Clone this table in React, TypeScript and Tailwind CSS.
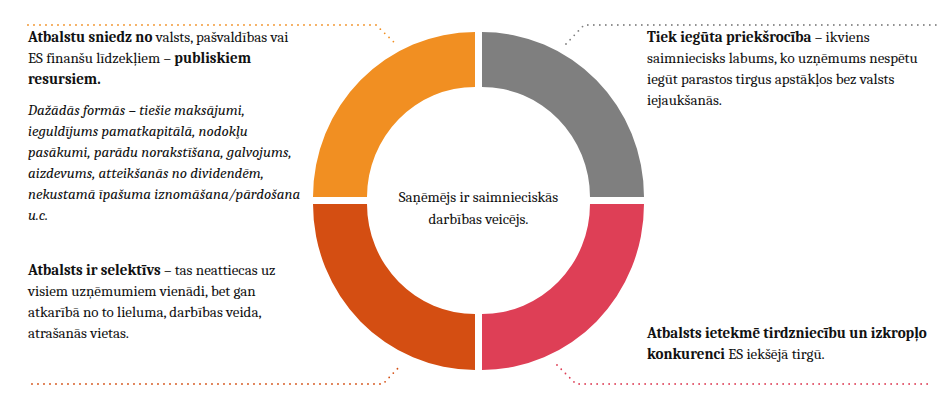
import React from 'react';

// four quarter rings of the donut, each with its own colour
const segments = [
  { color: '#F18F22', d: 'M 0 165 A 162 165 0 0 1 162 0 L 162 55 A 108 110 0 0 0 54 165 Z' },
  { color: '#7F7F7F', d: 'M 169 0 A 162 165 0 0 1 331 165 L 277 165 A 108 110 0 0 0 169 55 Z' },
  { color: '#D44E12', d: 'M 0 172 A 162 166 0 0 0 162 338 L 162 282 A 108 110 0 0 1 54 172 Z' },
  { color: '#DE3F56', d: 'M 331 172 A 162 166 0 0 1 169 338 L 169 282 A 108 110 0 0 0 277 172 Z' },
];

// dotted leader lines from the texts to the ring
const leaders = [
  { color: '#F18F22', points: '28,25 376,25 397,45' },
  { color: '#7F7F7F', points: '566,44 584,25 938,25' },
  { color: '#D44E12', points: '32,384 383,384 401,365' },
  { color: '#DE3F56', points: '557,365 576,384 928,384' },
];

const Donut = () => (
  <div className="relative w-[331px] h-[338px] shrink-0">
    <svg width="331" height="338" viewBox="0 0 331 338" className="block">
      {segments.map((s, i) => (
        <path key={i} d={s.d} fill={s.color} />
      ))}
    </svg>
    <div className="absolute inset-0 flex items-center justify-center pt-[14px]">
      <p className="text-center text-[15px] leading-[22px]">
        Saņēmējs ir saimnieciskās
        <br />
        darbības veicējs.
      </p>
    </div>
  </div>
);

export default function App() {
  return (
    <div className="relative w-[943px] h-[418px] bg-white overflow-hidden text-[#111111] font-serif">
      <div className="flex h-full">
        {/* left column */}
        <div className="w-[282px] ml-[28px] pt-[27px] text-[15px] leading-[21px] shrink-0">
          <p>
            <b>Atbalstu sniedz no</b> valsts, pašvaldības vai
            <br />
            ES finanšu līdzekļiem – <b>publiskiem</b>
            <br />
            <b>resursiem.</b>
          </p>
          <p className="italic mt-[10px]">
            Dažādās formās – tiešie maksājumi, ieguldījums pamatkapitālā, nodokļu pasākumi, parādu
            norakstīšana, galvojums, aizdevums, atteikšanās no dividendēm, nekustamā īpašuma
            iznomāšana/pārdošana u.c.
          </p>
          <p className="mt-[34px]">
            <b>Atbalsts ir selektīvs</b> – tas neattiecas uz visiem uzņēmumiem vienādi, bet gan
            atkarībā no to lieluma, darbības veida, atrašanās vietas.
          </p>
        </div>

        {/* ring */}
        <div className="ml-[3px] pt-[32px]">
          <Donut />
        </div>

        {/* right column */}
        <div className="w-[285px] ml-[3px] pt-[27px] text-[15px] leading-[21px] shrink-0">
          <p>
            <b>Tiek iegūta priekšrocība</b> – ikviens saimniecisks labums, ko uzņēmums nespētu
            iegūt parastos tirgus apstākļos bez valsts iejaukšanās.
          </p>
          <p className="mt-[212px]">
            <b>Atbalsts ietekmē tirdzniecību un izkropļo konkurenci</b> ES iekšējā tirgū.
          </p>
        </div>
      </div>

      <svg
        className="absolute inset-0 pointer-events-none"
        width="943"
        height="418"
        viewBox="0 0 943 418"
      >
        {leaders.map((l, i) => (
          <polyline
            key={i}
            points={l.points}
            fill="none"
            stroke={l.color}
            strokeWidth="1.8"
            strokeLinecap="round"
            strokeDasharray="0 6"
          />
        ))}
      </svg>
    </div>
  );
}
